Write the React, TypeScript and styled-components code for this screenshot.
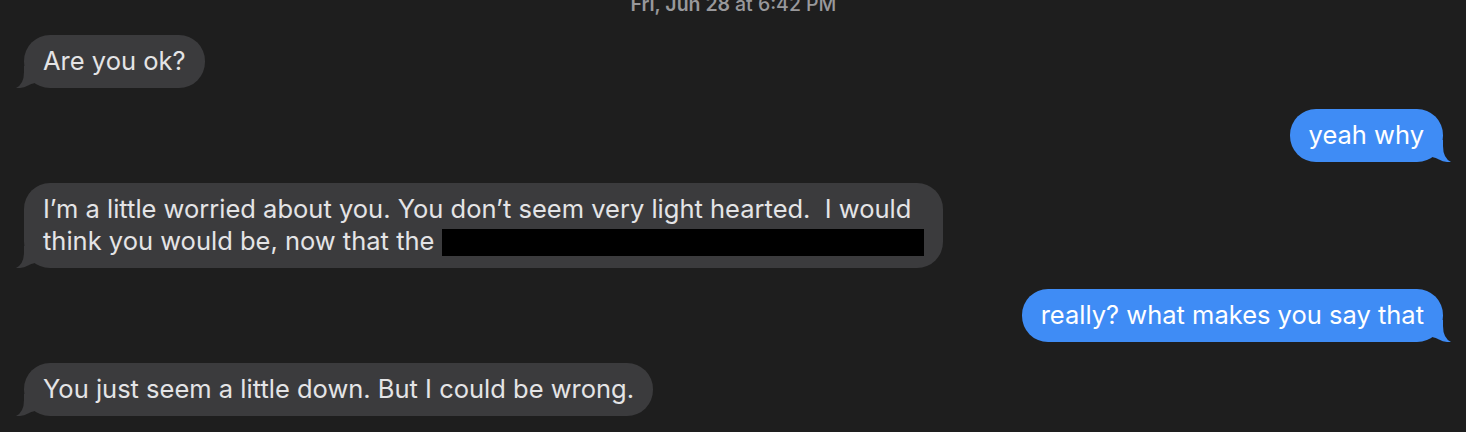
import styled, { createGlobalStyle } from "styled-components";

const GlobalStyle = createGlobalStyle`
  html, body {
    margin: 0;
    padding: 0;
    background: #1e1e1e;
  }
  body {
    font-family: Inter, "Liberation Sans", sans-serif;
    -webkit-font-smoothing: antialiased;
  }
`;

const Thread = styled.div`
  width: 1466px;
  height: 432px;
  overflow: hidden;
  background: #1e1e1e;
  box-sizing: border-box;
  padding: 0 23px 0 24px;
  display: flex;
  flex-direction: column;
`;

const Stamp = styled.div`
  margin-top: -8px;
  height: 43px;
  line-height: 24px;
  text-align: center;
  font-size: 19.5px;
  font-weight: 600;
  color: #98989b;
`;

const Light = styled.span`
  font-weight: 500;
`;

const Messages = styled.div`
  display: flex;
  flex-direction: column;
  gap: 21px;
`;

const Row = styled.div<{ $mine?: boolean }>`
  display: flex;
  justify-content: ${({ $mine }) => ($mine ? "flex-end" : "flex-start")};
`;

const Bubble = styled.div<{ $mine?: boolean }>`
  position: relative;
  padding: 10px 19px 11px;
  border-radius: 26px;
  font-size: 25.5px;
  line-height: 32px;
  background: ${({ $mine }) => ($mine ? "#3f8cf5" : "#3b3b3d")};
  color: ${({ $mine }) => ($mine ? "#ffffff" : "#e4e4e6")};
  white-space: nowrap;
`;

const Tail = styled.svg<{ $mine?: boolean }>`
  position: absolute;
  bottom: 0;
  width: 20px;
  height: 22px;
  ${({ $mine }) => ($mine ? "right: -9px; transform: scaleX(-1);" : "left: -9px;")}
`;

const Redacted = styled.span`
  display: inline-block;
  width: 482px;
  height: 27px;
  background: #000;
  vertical-align: -6px;
`;

function BubbleTail({ mine }: { mine?: boolean }) {
  const fill = mine ? "#3f8cf5" : "#3b3b3d";
  return (
    <Tail $mine={mine} viewBox="0 0 20 22">
      <path d="M20 0 L9 0 L9 6 Q9 18 1 22 Q8 22.5 13 19.5 Q16 17.5 20 17 Z" fill={fill} />
    </Tail>
  );
}

type Msg = { mine?: boolean; content: React.ReactNode };

const messages: Msg[] = [
  { content: "Are you ok?" },
  { mine: true, content: "yeah why" },
  {
    content: (
      <>
        I’m a little worried about you. You don’t seem very light hearted.&nbsp; I would
        <br />
        think you would be, now that the <Redacted />
      </>
    ),
  },
  { mine: true, content: "really? what makes you say that" },
  { content: "You just seem a little down. But I could be wrong." },
];

export default function App() {
  return (
    <>
      <GlobalStyle />
      <Thread>
        <Stamp>
          Fri, Jun 28 <Light>at 6:42 PM</Light>
        </Stamp>
        <Messages>
          {messages.map((m, i) => (
            <Row key={i} $mine={m.mine}>
              <Bubble $mine={m.mine}>
                {m.content}
                <BubbleTail mine={m.mine} />
              </Bubble>
            </Row>
          ))}
        </Messages>
      </Thread>
    </>
  );
}
